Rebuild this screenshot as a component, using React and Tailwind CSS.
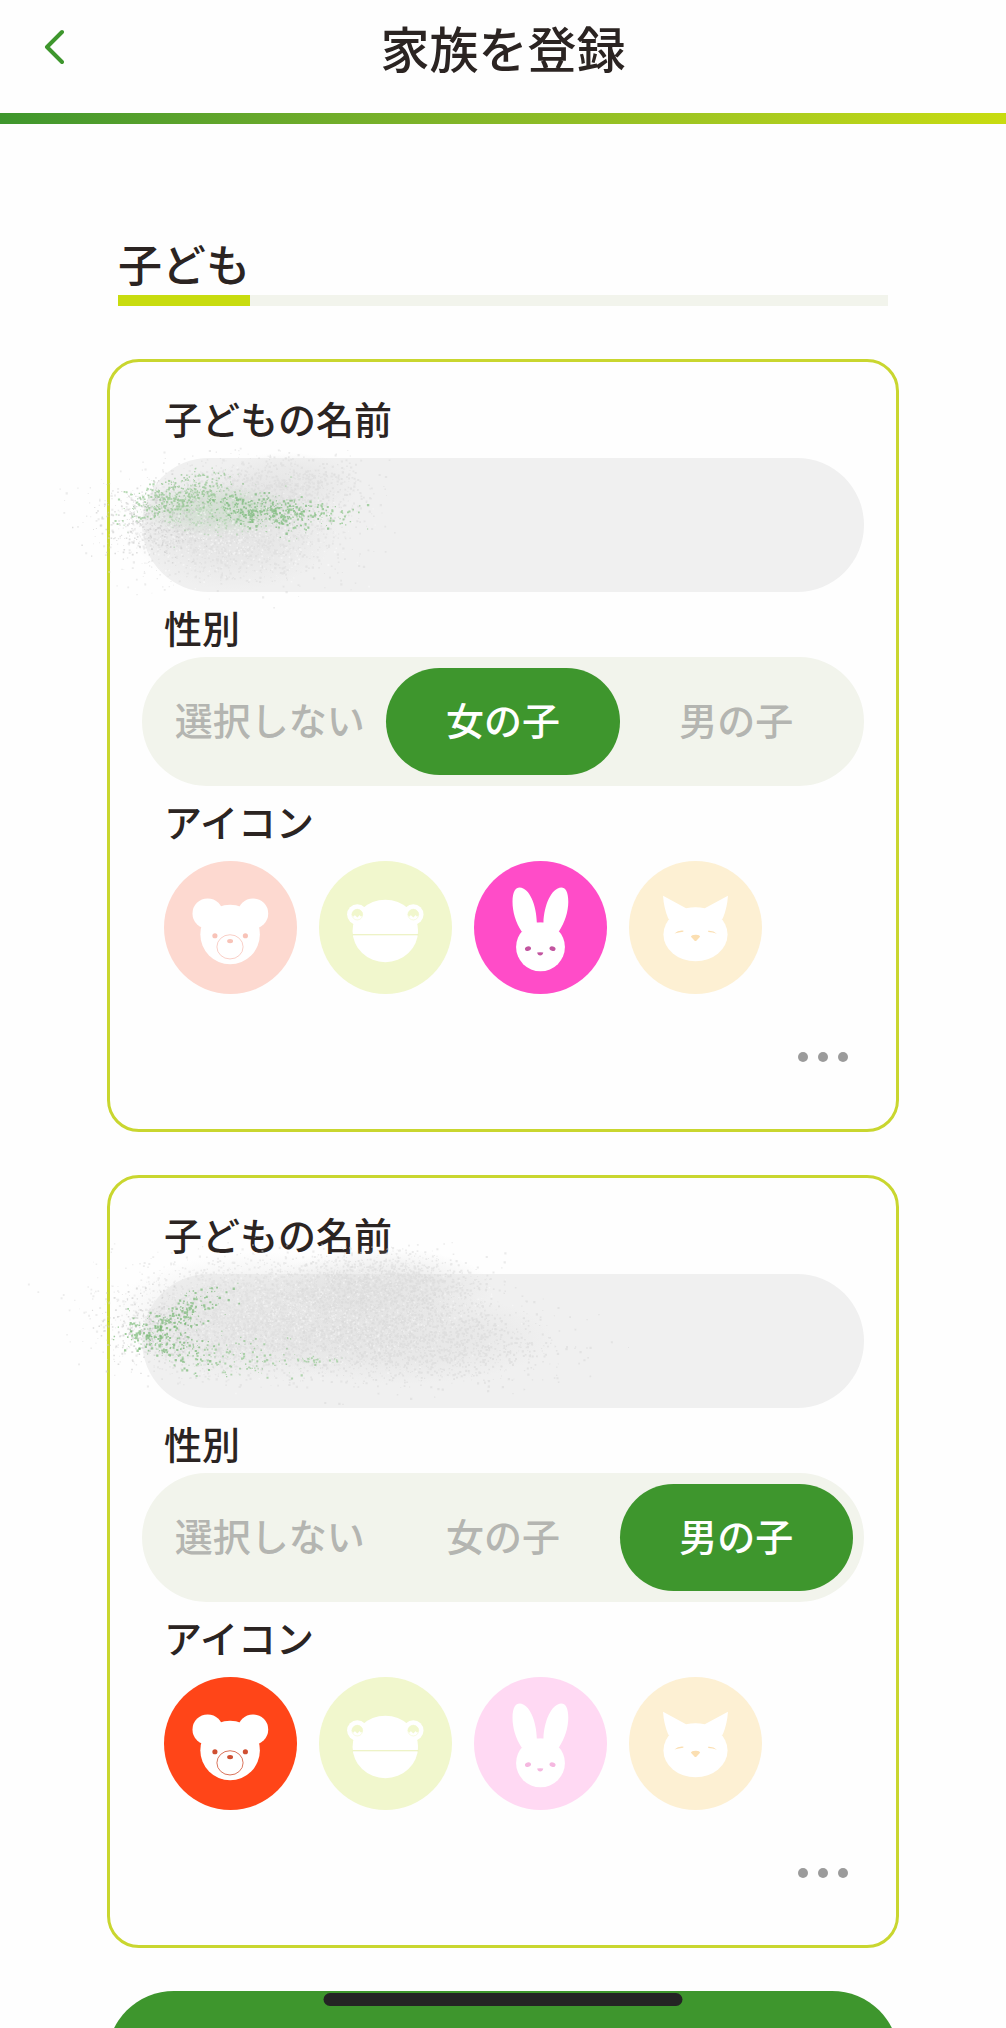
import { useState } from "react";

const genders = ["選択しない", "女の子", "男の子"];

const animals = [
  { name: "くま", Face: Bear, on: "#ff4518", off: "#fdd9d0", onMark: "#cf4f31", offMark: "#f8c3b8" },
  { name: "かえる", Face: Frog, on: "#c8dc0f", off: "#f1f7cd", onMark: "#b4c80a", offMark: "#e8efb4" },
  { name: "うさぎ", Face: Rabbit, on: "#ff4cc8", off: "#ffd9f3", onMark: "#c2559f", offMark: "#f5b8e0" },
  { name: "ねこ", Face: Cat, on: "#f5b324", off: "#fdf0d3", onMark: "#e09a10", offMark: "#fbdfb2" },
];

// small seeded generator, so the spray is the same on every render
function createRandom(seed) {
  let s = seed;
  return () => {
    s = (s * 16807) % 2147483647;
    return s / 2147483647;
  };
}

function spray(seed, clusters) {
  const rand = createRandom(seed);
  const gauss = () => (rand() + rand() + rand() + rand() - 2) * 1.7;
  return clusters.map(({ x, y, rx, ry, tilt = 0, count, size = 1, color, opacity }) => {
    let d = "";
    for (let i = 0; i < count; i++) {
      const gx = gauss();
      const px = (x + gx * rx).toFixed(1);
      const py = (y + gauss() * ry + gx * rx * tilt).toFixed(1);
      const w = (size * (0.5 + rand())).toFixed(1);
      d += `M${px} ${py}h${w}v${w}h-${w}z`;
    }
    return { d, color, opacity };
  });
}

const sprays = [
  {
    id: "spray-a",
    clouds: [
      { x: 92, y: 70, rx: 104, ry: 62, color: "#dedede" },
      { x: 145, y: 28, rx: 72, ry: 34, color: "#e2e2e2" },
      { x: 75, y: 52, rx: 76, ry: 26, color: "#c6dcc5" },
    ],
    dots: spray(71, [
      { x: 88, y: 68, rx: 58, ry: 27, count: 1800, size: 1.5, color: "#d9d9d9", opacity: 0.5 },
      { x: 138, y: 28, rx: 42, ry: 15, count: 700, size: 1.5, color: "#d8d8d8", opacity: 0.5 },
      { x: 8, y: 62, rx: 28, ry: 18, count: 420, size: 1.3, color: "#c8c8c8", opacity: 0.6 },
      { x: 90, y: 76, rx: 60, ry: 22, count: 500, size: 1.3, color: "#ffffff", opacity: 0.45 },
      { x: 38, y: 36, rx: 25, ry: 9, tilt: -0.3, count: 380, size: 1.5, color: "#76b873", opacity: 0.55 },
      { x: 75, y: 52, rx: 38, ry: 12, count: 330, size: 1.4, color: "#9acb97", opacity: 0.45 },
      { x: 122, y: 53, rx: 24, ry: 8, tilt: 0.1, count: 280, size: 1.6, color: "#66b065", opacity: 0.6 },
      { x: 170, y: 56, rx: 26, ry: 8, count: 100, size: 1.6, color: "#7fbf7c", opacity: 0.65 },
    ]),
  },
  {
    id: "spray-b",
    clouds: [
      { x: 120, y: 42, rx: 150, ry: 64, color: "#e0e0e0" },
      { x: 240, y: 14, rx: 110, ry: 40, color: "#dedede" },
      { x: 260, y: 64, rx: 150, ry: 46, color: "#e0e0e0" },
    ],
    dots: spray(209, [
      { x: 125, y: 34, rx: 76, ry: 25, count: 2600, size: 1.5, color: "#d9d9d9", opacity: 0.45 },
      { x: 245, y: 10, rx: 48, ry: 15, count: 1300, size: 1.5, color: "#d4d4d4", opacity: 0.45 },
      { x: 275, y: 68, rx: 66, ry: 20, count: 1700, size: 1.5, color: "#d6d6d6", opacity: 0.5 },
      { x: 90, y: 74, rx: 56, ry: 16, count: 700, size: 1.5, color: "#dadada", opacity: 0.5 },
      { x: 10, y: 54, rx: 24, ry: 17, count: 340, size: 1.3, color: "#c8c8c8", opacity: 0.6 },
      { x: 170, y: 42, rx: 80, ry: 24, count: 900, size: 1.3, color: "#ffffff", opacity: 0.4 },
      { x: 36, y: 42, rx: 22, ry: 9, tilt: -0.45, count: 200, size: 1.6, color: "#6fb46c", opacity: 0.65 },
      { x: 20, y: 66, rx: 23, ry: 10, tilt: 0.35, count: 170, size: 1.6, color: "#6fb46c", opacity: 0.65 },
      { x: 95, y: 83, rx: 34, ry: 10, count: 120, size: 1.5, color: "#85c282", opacity: 0.6 },
      { x: 172, y: 85, rx: 12, ry: 2, count: 26, size: 1.5, color: "#8cc789", opacity: 0.6 },
    ]),
  },
];

function Spray({ id, clouds, dots }) {
  return (
    <svg
      className="pointer-events-none absolute left-0 top-0 overflow-visible"
      width="400"
      height="134"
      viewBox="0 0 400 134"
      aria-hidden="true"
    >
      <defs>
        {clouds.map((c, i) => (
          <radialGradient key={i} id={`${id}-${i}`}>
            <stop offset="0" stopColor={c.color} stopOpacity="0.6" />
            <stop offset="0.5" stopColor={c.color} stopOpacity="0.45" />
            <stop offset="1" stopColor={c.color} stopOpacity="0" />
          </radialGradient>
        ))}
      </defs>
      {clouds.map((c, i) => (
        <ellipse key={i} cx={c.x} cy={c.y} rx={c.rx} ry={c.ry} fill={`url(#${id}-${i})`} />
      ))}
      {dots.map((p, i) => (
        <path key={i} d={p.d} fill={p.color} opacity={p.opacity} />
      ))}
    </svg>
  );
}

function Bear({ mark }) {
  return (
    <>
      <g fill="#fff">
        <circle cx="44" cy="53" r="15.3" />
        <circle cx="89.7" cy="53" r="15.3" />
        <circle cx="66.6" cy="74" r="30" />
      </g>
      <circle cx="51.3" cy="75.3" r="2.6" fill={mark} />
      <circle cx="82" cy="75.3" r="2.6" fill={mark} />
      <ellipse cx="66.5" cy="86.5" rx="13.2" ry="12.2" fill="none" stroke={mark} strokeWidth="0.8" />
      <ellipse cx="66.6" cy="80.7" rx="3" ry="2.2" fill={mark} />
    </>
  );
}

function FrogEye({ cx, fill }) {
  return (
    <g transform={`translate(${cx} 54)`}>
      <circle r="10.3" fill="#fff" />
      <circle r="5.4" fill="none" stroke={fill} strokeWidth="0.6" />
      <path d="M-5.6 0A5.6 5.6 0 0 1 5.6 0C5 2.4 3.4 2.6 2.6 0.4L0 3L-2.6 0.4C-3.4 2.6 -5 2.4 -5.6 0Z" fill={fill} />
    </g>
  );
}

function Frog({ mark, bg }) {
  return (
    <>
      <ellipse cx="66.8" cy="70.5" rx="33" ry="31.5" fill="#fff" />
      <FrogEye cx="38.6" fill={bg} />
      <FrogEye cx="95" fill={bg} />
      <path d="M34 74.3H100" stroke={mark} strokeWidth="1" />
    </>
  );
}

function Rabbit({ mark }) {
  return (
    <>
      <g fill="#fff">
        <path d="M48 71C42 62 38.8 51 38.8 41C38.8 31 42 26.7 46 26.7C56 27 63 45 63.3 62H70C70.5 45 78 27 88 26.7C92 26.7 95 31 95 41C95 51 91.5 62 85.5 71Z" />
        <ellipse cx="67" cy="86.7" rx="24.6" ry="24.4" />
      </g>
      <ellipse cx="54.4" cy="88.3" rx="3.1" ry="2.3" transform="rotate(-15 54.4 88.3)" fill={mark} />
      <ellipse cx="79.1" cy="88.3" rx="3.1" ry="2.3" transform="rotate(15 79.1 88.3)" fill={mark} />
      <path d="M63.6 92.3Q66.7 91.4 69.8 92.3Q69.2 95.2 66.7 95.2T63.6 92.3Z" fill={mark} />
    </>
  );
}

function Cat({ mark }) {
  return (
    <>
      <g fill="#fff">
        <path d="M34.3 35L57.5 47.6Q67 45.6 76.3 47.6L99.7 35Q99 47 94.5 58L67 75L39.5 58Q35 47 34.3 35Z" />
        <ellipse cx="67" cy="74" rx="32.3" ry="27" />
      </g>
      <path d="M45.8 73Q49.5 69.6 55 70.2L54.6 71.4Q50 72 45.8 73Z" fill={mark} />
      <path d="M88.6 73.2Q85 69.8 79.6 70.2L80 71.6Q84.4 72 88.6 73.2Z" fill={mark} />
      <path d="M62.4 76.4Q62.8 74.6 67 74.4T71.6 76.4L67.6 80.6H66.4Z" fill={mark} />
    </>
  );
}

function ChildCard({ id, initialGender, initialIcon, cover }) {
  const [gender, setGender] = useState(initialGender);
  const [icon, setIcon] = useState(initialIcon);
  const [name, setName] = useState("");

  return (
    <section className="flex flex-col rounded-[32px] border-3 border-[#c9d62f] px-8 pt-8 pb-[67px]">
      <label htmlFor={`${id}-name`} className="px-[22px] leading-[48px]">
        子どもの名前
      </label>
      <div className="relative mt-4">
        <input
          id={`${id}-name`}
          type="text"
          value={name}
          onChange={(e) => setName(e.target.value)}
          className="block h-[134px] w-full rounded-full bg-[#f0f0f0] px-11 outline-none"
        />
        <Spray {...cover} />
      </div>

      <fieldset className="mt-[11px]">
        <legend className="px-[22px] leading-[48px]">性別</legend>
        <div className="mt-[6px] grid grid-cols-3 rounded-full bg-[#f2f4ec] p-[11px]">
          {genders.map((g) => (
            <label
              key={g}
              className={`relative flex h-[107px] cursor-pointer items-center justify-center whitespace-nowrap rounded-full pb-[6px] ${
                gender === g ? "bg-[#3e962d] text-white" : "text-[#b4b5b1]"
              }`}
            >
              <input
                type="radio"
                name={`${id}-gender`}
                checked={gender === g}
                onChange={() => setGender(g)}
                className="sr-only"
              />
              {g}
            </label>
          ))}
        </div>
      </fieldset>

      <fieldset className="mt-[11px] px-[22px]">
        <legend className="leading-[48px]">アイコン</legend>
        <div className="mt-4 flex flex-wrap gap-[22px]">
          {animals.map(({ name, Face, on, off, onMark, offMark }) => {
            const active = icon === name;
            return (
              <label key={name} className="relative cursor-pointer">
                <input
                  type="radio"
                  name={`${id}-icon`}
                  aria-label={name}
                  checked={active}
                  onChange={() => setIcon(name)}
                  className="sr-only"
                />
                <svg className="size-[133px]" viewBox="0 0 134 134" aria-hidden="true">
                  <circle cx="67" cy="67" r="67" fill={active ? on : off} />
                  <Face mark={active ? onMark : offMark} bg={active ? on : off} />
                </svg>
              </label>
            );
          })}
        </div>
      </fieldset>

      <button type="button" aria-label="メニュー" className="mt-[58px] mr-4 flex gap-[10px] self-end">
        <span className="size-[10px] rounded-full bg-[#9b9b9b]" />
        <span className="size-[10px] rounded-full bg-[#9b9b9b]" />
        <span className="size-[10px] rounded-full bg-[#9b9b9b]" />
      </button>
    </section>
  );
}

export default function App() {
  return (
    <div className="relative flex h-screen flex-col overflow-hidden bg-[#fefefe] font-['Noto_Sans_CJK_JP',sans-serif] text-[38px] font-medium text-[#2b2422]">
      <header className="shrink-0">
        <div className="grid h-[113px] grid-cols-[1fr_auto_1fr] items-start px-11 pt-3">
          <button type="button" aria-label="戻る" className="flex h-[70px] w-5 items-center">
            <svg className="h-9 w-5" viewBox="0 0 20 36" fill="none" aria-hidden="true">
              <path
                d="M18 3L3 18L18 33"
                stroke="#3e962d"
                strokeWidth="4"
                strokeLinecap="round"
                strokeLinejoin="round"
              />
            </svg>
          </button>
          <h1 className="text-[49px] leading-[70px]">家族を登録</h1>
        </div>
        <div className="h-[11px] bg-linear-to-r from-[#3e962d] to-[#c8dc0f]" />
      </header>

      <main className="flex flex-1 flex-col overflow-y-auto px-[107px] pt-[107px] [scrollbar-width:none]">
        <div className="mx-[11px] border-b-[11px] border-[#f2f4ec]">
          <h2 className="-mb-[11px] w-fit border-b-[11px] border-[#c8dc0f] text-[44px] leading-[64px]">
            子ども
          </h2>
        </div>

        <div className="mt-[53px] flex flex-col gap-[43px]">
          <ChildCard id="child1" initialGender="女の子" initialIcon="うさぎ" cover={sprays[0]} />
          <ChildCard id="child2" initialGender="男の子" initialIcon="くま" cover={sprays[1]} />
          <button type="button" aria-label="登録する" className="h-[134px] shrink-0 rounded-full bg-[#3e962d]" />
        </div>
      </main>

      <div className="absolute bottom-[22px] left-1/2 h-[13px] w-[359px] -translate-x-1/2 rounded-full bg-[#242424]" />
    </div>
  );
}
